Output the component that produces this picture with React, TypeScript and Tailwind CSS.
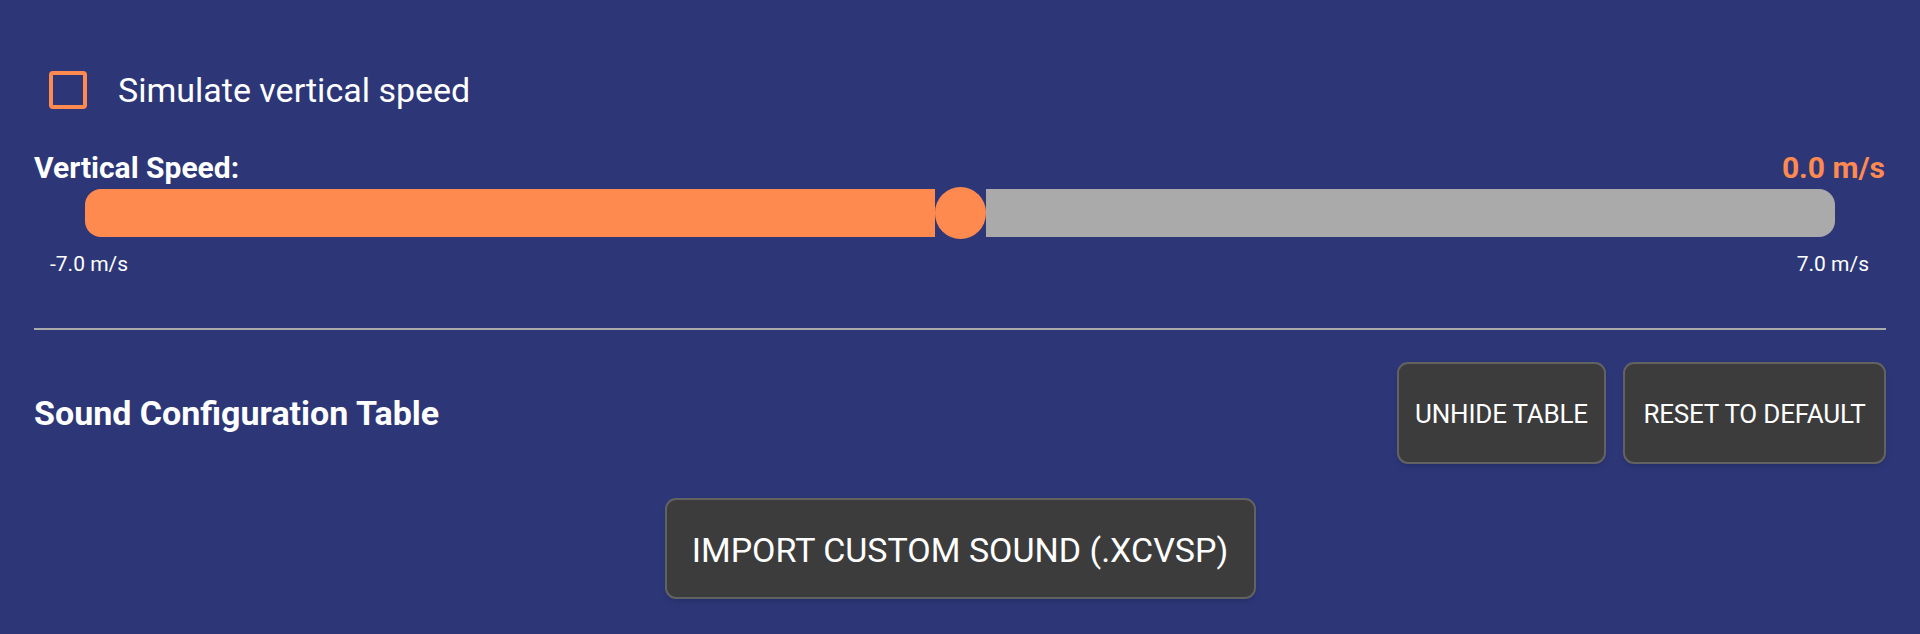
import React, { useState } from "react";

const App: React.FC = () => {
  const [simulate, setSimulate] = useState(false);
  const speed = 0.0;

  return (
    <div className="min-h-[634px] bg-[#2d3778] px-[34px] pt-[71px] font-['Roboto','Liberation_Sans',sans-serif] text-white">
      {/* Simulate checkbox */}
      <label className="flex items-center gap-[31px] pl-[15px] cursor-pointer">
        <span
          onClick={() => setSimulate(!simulate)}
          className={`h-[38px] w-[38px] rounded-[4px] border-4 border-[#ff8a50] ${
            simulate ? "bg-[#ff8a50]" : ""
          }`}
        />
        <span className="text-[34px] leading-[38px]">Simulate vertical speed</span>
      </label>

      {/* Vertical speed */}
      <div className="mt-[41px] flex items-center justify-between pr-px">
        <span className="text-[30px] font-bold leading-[36px]">Vertical Speed:</span>
        <span className="text-[30px] font-bold leading-[36px] text-[#ff8a50]">
          {speed.toFixed(1)} m/s
        </span>
      </div>

      {/* Slider */}
      <div className="mx-[51px] mt-px flex h-[52px] items-center">
        <div className="h-[48px] flex-1 rounded-l-[16px] bg-[#ff8a50]" />
        <div className="h-[52px] w-[51px] rounded-full bg-[#ff8a50]" />
        <div className="h-[48px] flex-1 rounded-r-[16px] bg-[#aaaaaa]" />
      </div>

      <div className="mt-[13px] flex justify-between pl-[16px] pr-[17px] text-[21px] leading-[25px]">
        <span>-7.0 m/s</span>
        <span>7.0 m/s</span>
      </div>

      <div className="mt-[51px] h-[2px] bg-[#aaaaaa]" />

      {/* Sound config */}
      <div className="mt-[32px] flex items-center justify-between">
        <h2 className="text-[34px] font-bold">Sound Configuration Table</h2>
        <div className="flex gap-[17px]">
          <button className="h-[102px] w-[209px] rounded-[11px] border-2 border-[#626262] bg-[#3c3c3c] pt-[3px] text-[26px] tracking-[-0.2px] text-white shadow-md">
            UNHIDE TABLE
          </button>
          <button className="h-[102px] w-[263px] rounded-[11px] border-2 border-[#626262] bg-[#3c3c3c] pt-[3px] text-[26px] tracking-[-0.2px] text-white shadow-md">
            RESET TO DEFAULT
          </button>
        </div>
      </div>

      <div className="mt-[34px] flex justify-center">
        <button className="h-[101px] w-[591px] rounded-[11px] border-2 border-[#626262] bg-[#3c3c3c] pt-[3px] text-[34px] text-white shadow-md">
          IMPORT CUSTOM SOUND (.XCVSP)
        </button>
      </div>
    </div>
  );
};

export default App;
